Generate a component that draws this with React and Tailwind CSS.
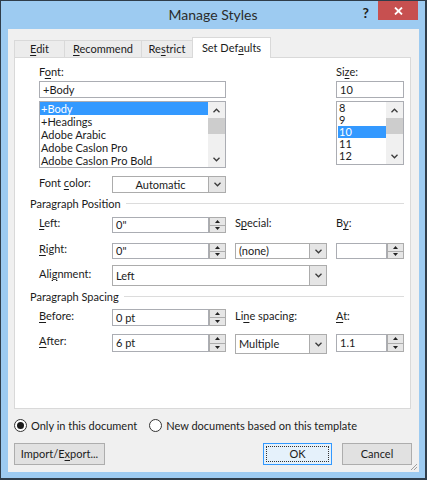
import React from "react";

const U = ({ children }) => (
  <span className="underline underline-offset-[2px] decoration-[1px]">{children}</span>
);

const Chev = ({ up }) => (
  <svg width="7" height="5" viewBox="0 0 7 5">
    <path
      d={up ? "M0.5 4.2L3.5 1.2L6.5 4.2" : "M0.5 0.8L3.5 3.8L6.5 0.8"}
      stroke="#3a3a3a"
      strokeWidth="1.3"
      fill="none"
    />
  </svg>
);

const Tri = ({ up }) => (
  <svg width="5" height="3" viewBox="0 0 5 3">
    <path d={up ? "M0 3L2.5 0L5 3Z" : "M0 0L5 0L2.5 3Z"} fill="#222" />
  </svg>
);

function Spin({ cls, value }) {
  return (
    <div className={"flex " + cls}>
      <div className="flex-1 border border-[#abadb3] bg-white pl-[3px] flex items-center">
        {value}
      </div>
      <div className="w-[17px] flex flex-col">
        <div className="flex-1 border border-[#acacac] bg-[#e6e6e6] flex items-center justify-center">
          <Tri up />
        </div>
        <div className="flex-1 border border-t-0 border-[#acacac] bg-[#e6e6e6] flex items-center justify-center">
          <Tri />
        </div>
      </div>
    </div>
  );
}

function Drop({ cls, value, center }) {
  return (
    <div className={"flex border border-[#acacac] bg-white " + cls}>
      <div
        className={
          "flex-1 flex items-center " + (center ? "justify-center" : "pl-[3px]")
        }
      >
        {value}
      </div>
      <div className="w-[17px] bg-[#e5e5e5] border-l border-[#acacac] flex items-center justify-center">
        <Chev />
      </div>
    </div>
  );
}

function Scroll() {
  return (
    <div className="w-[17px] bg-[#f0f0f0] flex flex-col">
      <div className="h-[16px] flex items-center justify-center">
        <Chev up />
      </div>
      <div className="h-[16px] bg-[#cdcdcd]" />
      <div className="flex-1" />
      <div className="h-[16px] flex items-center justify-center">
        <Chev />
      </div>
    </div>
  );
}

function Heading({ children }) {
  return (
    <div className="mt-[3px] h-[15px] flex items-center pl-[15px] pr-[6px]">
      <span>{children}</span>
      <div className="flex-1 h-px bg-[#dcdcdc] ml-[5px]" />
    </div>
  );
}

export default function App() {
  const fonts = ["+Body", "+Headings", "Adobe Arabic", "Adobe Caslon Pro", "Adobe Caslon Pro Bold"];
  const sizes = ["8", "9", "10", "11", "12"];
  return (
    <div className="w-[427px] h-[480px] flex flex-col bg-[#9dcbf1] border-l border-t border-r-2 border-b-2 border-[#2f3d4a] font-['Lato','Liberation_Sans',sans-serif] text-[11px] text-[#1b1b1b] overflow-hidden select-none leading-[14px]">
      {/* Title bar */}
      <div className="h-[28px] shrink-0 grid grid-cols-[1fr_auto_1fr]">
        <div />
        <div className="pt-[4px] text-[14px] text-[#2b2b2b] leading-[20px]">Manage Styles</div>
        <div className="flex justify-end items-start pr-[7px]">
          <span className="mt-[4px] mr-[9px] text-[14px] font-bold text-[#222] leading-[16px]">?</span>
          <div className="w-[40px] h-[19px] bg-[#c75050] flex items-center justify-center">
            <svg width="9" height="8" viewBox="0 0 9 8">
              <path d="M1 0.5L8 7.5M8 0.5L1 7.5" stroke="#fff" strokeWidth="1.8" />
            </svg>
          </div>
        </div>
      </div>

      {/* Body */}
      <div className="flex-1 flex pl-[7px] pr-[6px] pb-[6px]">
        <div className="flex-1 bg-[#f0f0f0] relative flex flex-col pt-[8px] pl-[6px] pr-[7px]">
          {/* Tabs */}
          <div className="h-[20px] flex items-end relative z-10">
            <div className="w-[51px] h-[17px] border border-b-0 border-[#d9d9d9] bg-[#ececec] flex items-center justify-center">
              <span><U>E</U>dit</span>
            </div>
            <div className="-ml-px w-[78px] h-[17px] border border-b-0 border-[#d9d9d9] bg-[#ececec] flex items-center justify-center">
              <span><U>R</U>ecommend</span>
            </div>
            <div className="-ml-px w-[52px] h-[17px] border border-b-0 border-[#d9d9d9] bg-[#ececec] flex items-center justify-center">
              <span>Re<U>s</U>trict</span>
            </div>
            <div className="-ml-px w-[79px] h-[21px] -mb-px border border-b-0 border-[#d9d9d9] bg-white flex items-center justify-center">
              <span>Set Def<U>a</U>ults</span>
            </div>
          </div>

          {/* Panel */}
          <div className="h-[352px] mr-[1px] border border-[#d9d9d9] bg-white flex flex-col">
            {/* Font / Size */}
            <div className="mt-[6px] pl-[24px] flex">
              <div className="w-[187px] flex flex-col">
                <div className="h-[15px] leading-[15px]">F<U>o</U>nt:</div>
                <div className="mt-[2px] h-[17px] border border-[#abadb3] pl-[3px] flex items-center">+Body</div>
                <div className="mt-[3px] h-[67px] border border-[#abadb3] flex">
                  <div className="flex-1 flex flex-col">
                    {fonts.map((f, i) => (
                      <div
                        key={f}
                        className={
                          "h-[13px] leading-[13px] pl-[1px] " +
                          (i === 0 ? "bg-[#3399ff] text-white" : "")
                        }
                      >
                        {f}
                      </div>
                    ))}
                  </div>
                  <Scroll />
                </div>
              </div>
              <div className="ml-[110px] w-[68px] flex flex-col">
                <div className="h-[15px] leading-[15px]">Si<U>z</U>e:</div>
                <div className="mt-[2px] h-[17px] border border-[#abadb3] pl-[3px] flex items-center">10</div>
                <div className="mt-[3px] h-[64px] border border-[#abadb3] flex">
                  <div className="flex-1 flex flex-col pl-[1px]">
                    {sizes.map((s, i) => (
                      <div
                        key={s}
                        className={
                          "h-[12px] leading-[12px] pl-[1px] " +
                          (i === 2 ? "bg-[#3399ff] text-white" : "")
                        }
                      >
                        {s}
                      </div>
                    ))}
                  </div>
                  <Scroll />
                </div>
              </div>
            </div>

            {/* Font color */}
            <div className="mt-[8px] pl-[24px] flex items-center h-[17px]">
              <div className="w-[73px] pb-[3px]">Font <U>c</U>olor:</div>
              <Drop cls="w-[114px] h-[17px]" value="Automatic" center />
            </div>

            <Heading>Paragraph Position</Heading>

            {/* Left row */}
            <div className="mt-[6px] pl-[24px] flex items-center h-[16px]">
              <div className="w-[73px] pb-[5px]"><U>L</U>eft:</div>
              <Spin cls="w-[114px] h-[16px]" value={'0"'} />
              <div className="ml-[9px] w-[92px] pb-[5px]">S<U>p</U>ecial:</div>
              <div className="ml-[9px] w-[68px] pb-[5px]">B<U>y</U>:</div>
            </div>

            {/* Right row */}
            <div className="mt-[10px] pl-[24px] flex items-center h-[16px]">
              <div className="w-[73px] pb-[4px]"><U>R</U>ight:</div>
              <Spin cls="w-[114px] h-[16px]" value={'0"'} />
              <Drop cls="ml-[9px] w-[92px] h-[16px]" value="(none)" />
              <Spin cls="ml-[9px] w-[68px] h-[16px]" value="" />
            </div>

            {/* Alignment */}
            <div className="mt-[6px] pl-[24px] flex items-center h-[21px]">
              <div className="w-[73px] pb-[4px]">Ali<U>g</U>nment:</div>
              <Drop cls="w-[215px] h-[21px]" value="Left" />
            </div>

            <Heading>Paragraph Spacing</Heading>

            {/* Before row */}
            <div className="mt-[5px] pl-[24px] flex items-center h-[17px]">
              <div className="w-[73px] pb-[4px]"><U>B</U>efore:</div>
              <Spin cls="w-[114px] h-[17px]" value="0 pt" />
              <div className="ml-[9px] w-[92px] pb-[4px]">Li<U>n</U>e spacing:</div>
              <div className="ml-[9px] w-[68px] pb-[4px]"><U>A</U>t:</div>
            </div>

            {/* After row */}
            <div className="mt-[8px] pl-[24px] flex items-start h-[20px]">
              <div className="w-[73px] h-[18px] flex items-center pb-[4px]"><U>A</U>fter:</div>
              <Spin cls="w-[114px] h-[18px]" value="6 pt" />
              <Drop cls="ml-[9px] w-[92px] h-[20px]" value="Multiple" />
              <Spin cls="ml-[9px] w-[68px] h-[18px]" value="1.1" />
            </div>
          </div>

          {/* Radios */}
          <div className="mt-[9px] h-[15px] flex items-center">
            <div className="w-[13px] h-[13px] rounded-full border border-[#333] bg-white flex items-center justify-center">
              <div className="w-[7px] h-[7px] rounded-full bg-[#1b1b1b]" />
            </div>
            <span className="ml-[4px]">Only in this document</span>
            <div className="ml-[12px] w-[13px] h-[13px] rounded-full border border-[#333] bg-white" />
            <span className="ml-[4px]">New documents based on this template</span>
          </div>

          {/* Buttons */}
          <div className="mt-[10px] h-[22px] flex">
            <div className="w-[91px] border border-[#adadad] bg-[#e1e1e1] flex items-center justify-center">
              <span>Import/E<U>x</U>port...</span>
            </div>
            <div className="ml-auto w-[69px] border border-[#3399ff] bg-[#e5f1fb] p-[2px] flex">
              <div className="flex-1 border border-dotted border-[#333] flex items-center justify-center">OK</div>
            </div>
            <div className="ml-[10px] w-[70px] border border-[#adadad] bg-[#e1e1e1] flex items-center justify-center">
              Cancel
            </div>
          </div>

          {/* Resize grip */}
          <svg className="absolute right-[1px] bottom-[1px]" width="8" height="8" viewBox="0 0 8 8">
            <path d="M7 1L1 7M7 4L4 7M7 7L7 7" stroke="#a0a0a0" strokeWidth="1" />
          </svg>
        </div>
      </div>
    </div>
  );
}
